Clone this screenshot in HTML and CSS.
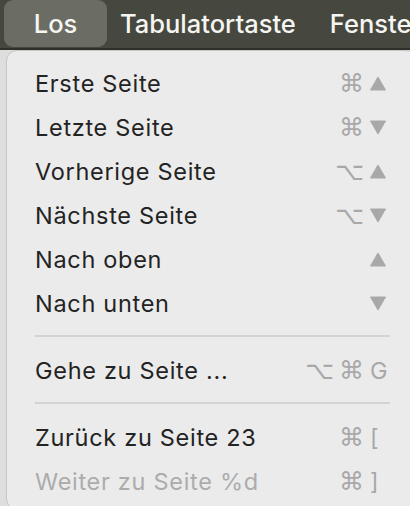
FILE: index.html
```
<!DOCTYPE html>
<html lang="de">
<head>
<meta charset="utf-8">
<link rel="stylesheet" href="styles.css">
</head>
<body>
<div class="menubar">
  <div class="mb-item active">Los</div>
  <div class="mb-item">Tabulatortaste</div>
  <div class="mb-item">Fenster</div>
</div>
<div class="menu">
  <div class="row"><span class="label">Erste Seite</span><span class="sc"><span class="mods"><span class="g">⌘</span></span><span class="key"><svg class="tri" viewBox="0 0 16 15"><path d="M8 1 L15.5 14 L0.5 14 Z"/></svg></span></span></div>
  <div class="row"><span class="label">Letzte Seite</span><span class="sc"><span class="mods"><span class="g">⌘</span></span><span class="key"><svg class="tri" viewBox="0 0 16 15"><path d="M0.5 1 L15.5 1 L8 14 Z"/></svg></span></span></div>
  <div class="row"><span class="label">Vorherige Seite</span><span class="sc"><span class="mods"><span class="g">⌥</span></span><span class="key"><svg class="tri" viewBox="0 0 16 15"><path d="M8 1 L15.5 14 L0.5 14 Z"/></svg></span></span></div>
  <div class="row"><span class="label">Nächste Seite</span><span class="sc"><span class="mods"><span class="g">⌥</span></span><span class="key"><svg class="tri" viewBox="0 0 16 15"><path d="M0.5 1 L15.5 1 L8 14 Z"/></svg></span></span></div>
  <div class="row"><span class="label">Nach oben</span><span class="sc"><span class="mods"></span><span class="key"><svg class="tri" viewBox="0 0 16 15"><path d="M8 1 L15.5 14 L0.5 14 Z"/></svg></span></span></div>
  <div class="row"><span class="label">Nach unten</span><span class="sc"><span class="mods"></span><span class="key"><svg class="tri" viewBox="0 0 16 15"><path d="M0.5 1 L15.5 1 L8 14 Z"/></svg></span></span></div>
  <div class="sep"></div>
  <div class="row"><span class="label">Gehe zu Seite ...</span><span class="sc"><span class="mods"><span class="g">⌥</span><span class="g">⌘</span></span><span class="key">G</span></span></div>
  <div class="sep"></div>
  <div class="row"><span class="label">Zurück zu Seite 23</span><span class="sc"><span class="mods"><span class="g">⌘</span></span><span class="key">[</span></span></div>
  <div class="row disabled"><span class="label">Weiter zu Seite %d</span><span class="sc"><span class="mods"><span class="g">⌘</span></span><span class="key">]</span></span></div>
</div>
</body>
</html>
```
FILE: styles.css
```
html, body {
  margin: 0;
  padding: 0;
}
body {
  width: 410px;
  height: 506px;
  overflow: hidden;
  background: #dedede;
  font-family: "Inter", "Liberation Sans", sans-serif;
}
.menubar {
  height: 48px;
  background: #46483f;
  border-bottom: 2px solid #2f302a;
  display: flex;
  align-items: stretch;
  white-space: nowrap;
  overflow: hidden;
}
.mb-item {
  flex-shrink: 0;
  color: #f5f5f2;
  font-size: 25.5px;
  font-weight: 500;
  display: flex;
  align-items: center;
  padding: 0 21px 0 13px;
  margin-bottom: 1px;
}
.mb-item.active {
  margin-left: 4px;
  width: 103px;
  box-sizing: border-box;
  justify-content: center;
  background: #6b6d64;
  border-radius: 9px;
  padding: 0;
  margin-right: 0;
}
.menu {
  margin-left: 6px;
  width: 410px;
  box-sizing: border-box;
  background: #ebebeb;
  border: 1px solid #c6c6c6;
  border-radius: 11px;
  padding: 10px 0 4px 0;
  height: 460px;
}
.row {
  height: 44px;
  display: flex;
  align-items: center;
  justify-content: space-between;
  padding-left: 28px;
  padding-right: 25px;
  font-size: 23.5px;
  letter-spacing: 0.7px;
  color: #232323;
}
.row.disabled .label {
  color: #acacac;
}
.sc {
  display: flex;
  align-items: center;
  color: #a8a8a8;
  letter-spacing: 0;
}
.mods {
  display: flex;
  gap: 5px;
  font-family: "DejaVu Sans", sans-serif;
  font-size: 25px;
  line-height: 1;
}
.key {
  width: 20px;
  margin-left: 6px;
  display: flex;
  align-items: center;
  font-size: 23.5px;
}
.tri {
  width: 16px;
  height: 15px;
  fill: #a8a8a8;
  stroke: #a8a8a8;
  stroke-width: 1;
  stroke-linejoin: round;
}
.sep {
  height: 2px;
  background: #d3d3d3;
  margin: 10px 25px 11px 28px;
}
```
